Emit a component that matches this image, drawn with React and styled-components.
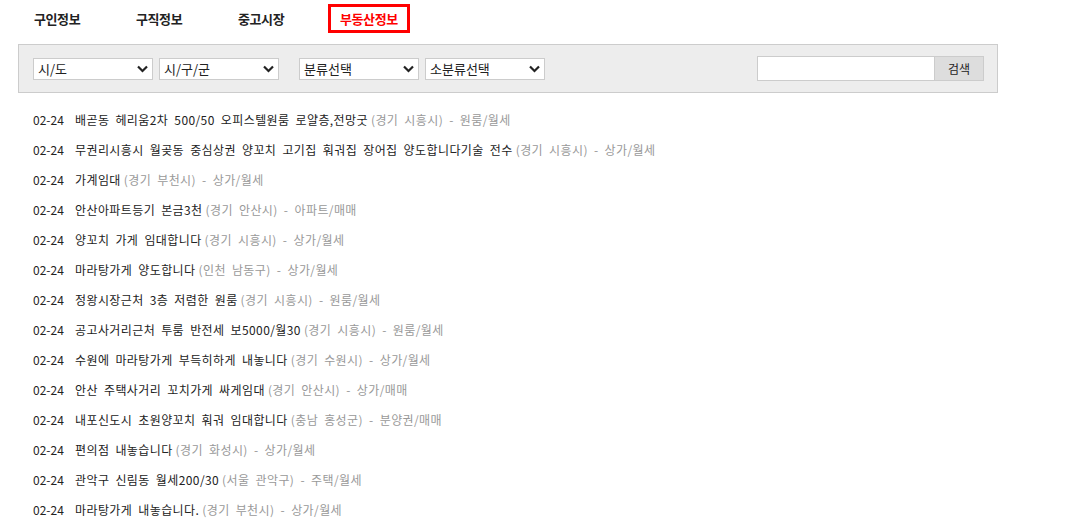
import styled, { createGlobalStyle } from 'styled-components';

const FONT = `"Noto Sans CJK KR", "Noto Sans", "Liberation Sans", sans-serif`;

const MENUS = ['구인정보', '구직정보', '중고시장', '부동산정보'];
const ACTIVE = '부동산정보';

const SELECTS = [
  { label: '시/도', group: 0 },
  { label: '시/구/군', group: 0 },
  { label: '분류선택', group: 1 },
  { label: '소분류선택', group: 1 },
];

const ITEMS = [
  ['배곧동 헤리움2차 500/50 오피스텔원룸 로얄층,전망굿', '(경기 시흥시) - 원룸/월세'],
  ['무권리시흥시 월곶동 중심상권 양꼬치 고기집 훠궈집 장어집 양도합니다기술 전수', '(경기 시흥시) - 상가/월세'],
  ['가계임대', '(경기 부천시) - 상가/월세'],
  ['안산아파트등기 본금3천', '(경기 안산시) - 아파트/매매'],
  ['양꼬치 가게 임대합니다', '(경기 시흥시) - 상가/월세'],
  ['마라탕가게 양도합니다', '(인천 남동구) - 상가/월세'],
  ['정왕시장근처 3층 저렴한 원룸', '(경기 시흥시) - 원룸/월세'],
  ['공고사거리근처 투룸 반전세 보5000/월30', '(경기 시흥시) - 원룸/월세'],
  ['수원에 마라탕가게 부득히하게 내놓니다', '(경기 수원시) - 상가/월세'],
  ['안산 주택사거리 꼬치가게 싸게임대', '(경기 안산시) - 상가/매매'],
  ['내포신도시 초원양꼬치 훠궈 임대합니다', '(충남 홍성군) - 분양권/매매'],
  ['편의점 내놓습니다', '(경기 화성시) - 상가/월세'],
  ['관악구 신림동 월세200/30', '(서울 관악구) - 주택/월세'],
  ['마라탕가게 내놓습니다.', '(경기 부천시) - 상가/월세'],
];

const GlobalStyle = createGlobalStyle`
  body {
    margin: 0;
    background: #fff;
    font-family: ${FONT};
    color: #222;
  }
  * { box-sizing: border-box; }
`;

const Chevron = () => (
  <svg width="11" height="8" viewBox="0 0 11 8">
    <path d="M1 1.5 L5.5 6 L10 1.5" fill="none" stroke="#222" strokeWidth="2.2" />
  </svg>
);

const App = () => {
  return (
    <S.Page>
      <GlobalStyle />
      <S.Nav>
        {MENUS.map((m) => (
          <S.NavItem key={m} $active={m === ACTIVE}>{m}</S.NavItem>
        ))}
      </S.Nav>

      <S.FilterBar>
        <S.SelectGroup>
          {SELECTS.filter((s) => s.group === 0).map((s) => (
            <S.SelectBox key={s.label}>
              <span>{s.label}</span>
              <S.Arrow><Chevron /></S.Arrow>
            </S.SelectBox>
          ))}
        </S.SelectGroup>
        <S.SelectGroup>
          {SELECTS.filter((s) => s.group === 1).map((s) => (
            <S.SelectBox key={s.label}>
              <span>{s.label}</span>
              <S.Arrow><Chevron /></S.Arrow>
            </S.SelectBox>
          ))}
        </S.SelectGroup>
        <S.Search>
          <S.SearchInput type="text" />
          <S.SearchButton>검색</S.SearchButton>
        </S.Search>
      </S.FilterBar>

      <S.List>
        {ITEMS.map(([title, meta], i) => (
          <S.Row key={i}>
            <S.Date>02-24</S.Date>
            <S.Title>{title}</S.Title>
            <S.Meta>{meta}</S.Meta>
          </S.Row>
        ))}
      </S.List>
    </S.Page>
  );
};

const S = {
  Page: styled.div`
    width: 980px;
    margin-left: 18px;
  `,
  Nav: styled.ul`
    display: flex;
    margin: 4px 0 0;
    padding: 0 0 0 4px;
    list-style: none;
  `,
  NavItem: styled.li`
    width: ${(p) => (p.$active ? 'auto' : '102px')};
    padding: 3px 9px;
    border: 3px solid ${(p) => (p.$active ? '#ff0000' : 'transparent')};
    font-size: 13px;
    line-height: 17px;
    letter-spacing: -0.4px;
    font-weight: bold;
    color: ${(p) => (p.$active ? '#ff0000' : '#222')};
    cursor: pointer;
  `,
  FilterBar: styled.div`
    display: flex;
    align-items: center;
    gap: 20px;
    height: 49px;
    margin-top: 11px;
    padding: 0 13px 0 14px;
    background: #ededed;
    border: 1px solid #cccccc;
  `,
  SelectGroup: styled.div`
    display: flex;
    gap: 6px;
  `,
  SelectBox: styled.div`
    position: relative;
    width: 120px;
    height: 22px;
    padding-left: 4px;
    background: #fff;
    border: 1px solid #cccccc;
    font-size: 13px;
    line-height: 20px;
    color: #222;
  `,
  Arrow: styled.span`
    position: absolute;
    right: 4px;
    top: 6px;
    display: flex;
    pointer-events: none;
  `,
  Search: styled.div`
    display: flex;
    margin-left: auto;
  `,
  SearchInput: styled.input`
    width: 177px;
    height: 25px;
    border: 1px solid #cccccc;
    border-right: none;
    background: #fff;
    outline: none;
  `,
  SearchButton: styled.button`
    width: 50px;
    height: 25px;
    padding: 0;
    background: #dddddd;
    border: 1px solid #cccccc;
    font-family: ${FONT};
    font-size: 12px;
    color: #222;
    cursor: pointer;
  `,
  List: styled.ul`
    margin: 12px 0 0;
    padding: 0 0 0 15px;
    list-style: none;
  `,
  Row: styled.li`
    height: 30px;
    line-height: 30px;
    font-size: 12px;
    word-spacing: 3px;
    letter-spacing: 0.4px;
    white-space: nowrap;
  `,
  Date: styled.span`
    display: inline-block;
    width: 42px;
    color: #222;
    letter-spacing: 0;
  `,
  Title: styled.span`
    color: #222;
    margin-right: 3px;
  `,
  Meta: styled.span`
    color: #999;
  `,
};

export default App;
